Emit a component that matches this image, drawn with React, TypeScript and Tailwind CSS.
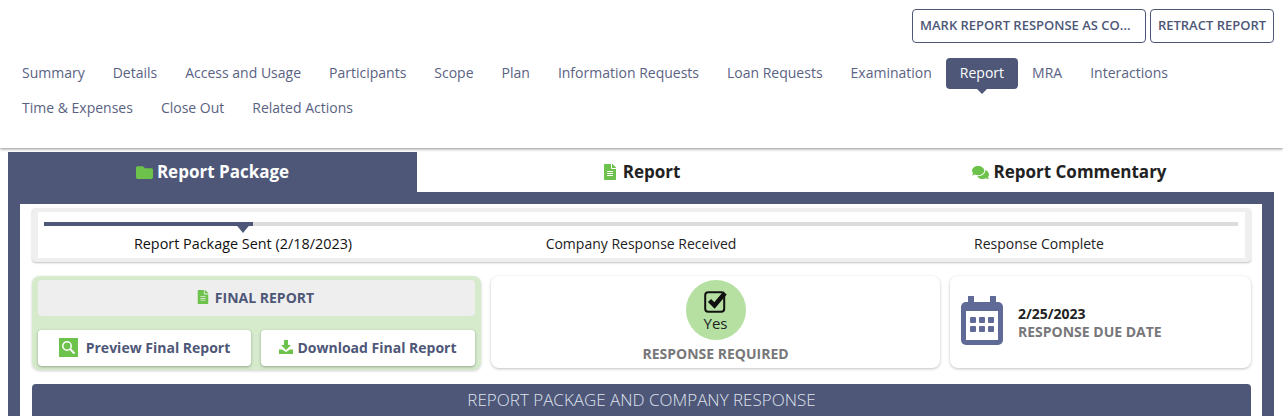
import { FaComments, FaFileAlt, FaFolder } from 'react-icons/fa';

const row1 = ['Summary', 'Details', 'Access and Usage', 'Participants', 'Scope', 'Plan', 'Information Requests', 'Loan Requests', 'Examination', 'Report', 'MRA', 'Interactions'];
const row2 = ['Time & Expenses', 'Close Out', 'Related Actions'];

function NavItem({ label }: { label: string }) {
  if (label === 'Report') {
    return (
      <div className="relative h-[31px] px-[14px] pb-[2px] rounded-[4px] bg-[#4e5778] text-white flex items-center">
        {label}
        <span className="absolute left-1/2 -ml-[5px] top-full w-0 h-0 border-x-[5px] border-x-transparent border-t-[5px] border-t-[#4e5778]" />
      </div>
    );
  }
  return <div className="h-[31px] px-[14px] pb-[2px] flex items-center text-[#5a6283]">{label}</div>;
}

function CalendarIcon() {
  return (
    <svg width="42" height="50" viewBox="0 0 42 50">
      <rect x="7" y="0" width="6" height="10" fill="#5f6a96" />
      <rect x="29" y="0" width="6" height="10" fill="#5f6a96" />
      <rect x="0" y="6" width="42" height="43" rx="5" fill="#5f6a96" />
      <rect x="5" y="15" width="32" height="29" fill="#fff" />
      <g fill="#5f6a96">
        <rect x="9" y="21" width="6" height="6" rx="1" />
        <rect x="18" y="21" width="6" height="6" rx="1" />
        <rect x="27" y="21" width="6" height="6" rx="1" />
        <rect x="9" y="30" width="6" height="6" rx="1" />
        <rect x="18" y="30" width="6" height="6" rx="1" />
        <rect x="27" y="30" width="6" height="6" rx="1" />
      </g>
    </svg>
  );
}

function CheckIcon() {
  return (
    <svg width="24" height="24" viewBox="0 0 24 24">
      <rect x="1.200" y="3.200" width="19" height="19.600" rx="3" fill="none" stroke="#111" strokeWidth="2" />
      <path d="M5.500 11.500 L10.500 16.500 L21 4" fill="none" stroke="#111" strokeWidth="4.500" />
    </svg>
  );
}

function DownloadIcon() {
  return (
    <svg width="14" height="14" viewBox="0 0 14 14" fill="#6cc24a">
      <path d="M5 0h4v5h3L7 10 2 5h3z" />
      <path d="M0 9.500h3L7 12l4-2.500h3V14H0z" />
    </svg>
  );
}

function SearchIcon() {
  return (
    <svg width="19" height="19" viewBox="0 0 19 19">
      <rect width="19" height="19" fill="#6cc24a" />
      <circle cx="8" cy="8" r="4.200" fill="none" stroke="#fff" strokeWidth="1.500" />
      <path d="M11 11 L15.500 15.500" stroke="#fff" strokeWidth="2" />
    </svg>
  );
}

export default function App() {
  return (
    <div className="w-[1283px] h-[416px] overflow-hidden bg-white font-['Open_Sans',sans-serif] text-[14px]">
      <header className="h-[148px] bg-white shadow-[0_1px_3px_rgba(0,0,0,0.45)] pt-[9px] relative">
        <div className="flex justify-end gap-1 pr-[9px] text-[13px] font-semibold text-[#4e5778]">
          <button className="w-[234px] h-[34px] px-[7px] border border-[#4e5778] rounded-[4px] text-left whitespace-nowrap">MARK REPORT RESPONSE AS CO...</button>
          <button className="w-[124px] h-[34px] border border-[#4e5778] rounded-[4px] whitespace-nowrap">RETRACT REPORT</button>
        </div>
        <nav className="mt-[15px] pl-2">
          <div className="flex">{row1.map((n) => <NavItem key={n} label={n} />)}</div>
          <div className="flex mt-[4px]">{row2.map((n) => <NavItem key={n} label={n} />)}</div>
        </nav>
      </header>

      <section className="mt-1 ml-2 w-[1266px]">
        <div className="h-10 grid grid-cols-[409px_448px_1fr] text-[17px] font-bold text-[#222]">
          <div className="bg-[#4e5778] text-white flex items-center justify-center gap-1"><FaFolder className="text-[#6cc24a]" size={17} />Report Package</div>
          <div className="flex items-center justify-center gap-[5px]"><FaFileAlt className="text-[#6cc24a]" size={16} />Report</div>
          <div className="flex items-center justify-center gap-1"><FaComments className="text-[#6cc24a]" size={17} />Report Commentary</div>
        </div>

        <div className="bg-[#4e5778] px-3 pt-3">
          <div className="bg-white pl-3 pr-[11px] pt-1 h-[212px]">
            <div className="bg-[#efefef] rounded-[4px] px-[6px] py-1 shadow-[0_1px_2px_rgba(0,0,0,0.25)]">
              <div className="bg-white h-[46px] pl-[6px] pr-[7px] pt-[10px]">
                <div className="relative h-1 bg-[#dcdcdc]">
                  <div className="h-1 w-[209px] bg-[#4e5778]" />
                  <span className="absolute left-[190px] top-0 w-0 h-0 border-x-[9px] border-x-transparent border-t-[11px] border-t-[#4e5778]" />
                </div>
                <div className="grid grid-cols-3 mt-[8px] text-center text-[#222] leading-[20px] text-[14px]">
                  <div className="text-[#111] text-[14.4px]">Report Package Sent (2/18/2023)</div>
                  <div>Company Response Received</div>
                  <div>Response Complete</div>
                </div>
              </div>
            </div>

            <div className="flex gap-[10px] mt-[14px]">
              <div className="w-[449px] h-[94px] bg-[#d5ebcc] rounded-[8px] px-[6px] pt-1 shadow-[0_1px_3px_rgba(0,0,0,0.2)]">
                <div className="h-9 pb-[2px] pr-[3px] bg-[#eeeeee] rounded-[4px] flex items-center justify-center gap-[5px] font-bold text-[#4e5778]">
                  <FaFileAlt className="text-[#6cc24a]" size={14} />FINAL REPORT
                </div>
                <div className="flex gap-[10px] mt-[14px] font-bold text-[#4e5778]">
                  <button className="w-[213px] h-9 pb-[2px] bg-white rounded-[4px] shadow-[0_1px_3px_rgba(0,0,0,0.3)] flex items-center justify-center gap-2">
                    <SearchIcon />
                    Preview Final Report
                  </button>
                  <button className="w-[214px] h-9 pb-[2px] bg-white rounded-[4px] shadow-[0_1px_3px_rgba(0,0,0,0.3)] flex items-center justify-center gap-1">
                    <DownloadIcon />Download Final Report
                  </button>
                </div>
              </div>

              <div className="w-[449px] h-[92px] bg-white rounded-[8px] shadow-[0_1px_3px_rgba(0,0,0,0.25)] pt-1 flex flex-col items-center">
                <div className="w-[60px] h-[60px] rounded-full bg-[#b5e0a2] flex flex-col items-center pt-[9px]">
                  <CheckIcon />
                  <span className="text-[#222] text-[15px] leading-[16px] mt-[2px]">Yes</span>
                </div>
                <div className="mt-[4px] font-bold text-[#77777a] leading-[20px]">RESPONSE REQUIRED</div>
              </div>

              <div className="w-[301px] h-[92px] bg-white rounded-[8px] shadow-[0_1px_3px_rgba(0,0,0,0.25)] pl-[11px] pt-5 flex gap-[15px]">
                <CalendarIcon />
                <div className="pt-[9px] font-bold leading-[18px]">
                  <div className="text-[#222]">2/25/2023</div>
                  <div className="text-[#77777a]">RESPONSE DUE DATE</div>
                </div>
              </div>
            </div>

            <div className="mt-[14px] h-8 bg-[#4e5778] rounded-t-[4px] flex items-center justify-center text-[17px] font-light text-[#dfe3ee]">
              REPORT PACKAGE AND COMPANY RESPONSE
            </div>
          </div>
        </div>
      </section>
    </div>
  );
}
